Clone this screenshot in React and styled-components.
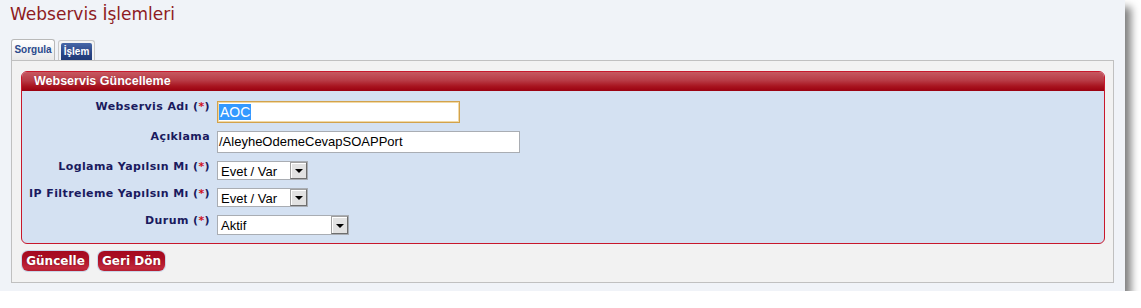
import React from 'react';
import styled, { createGlobalStyle } from 'styled-components';

const Global = createGlobalStyle`
  html, body { margin: 0; padding: 0; background: #ffffff; }
  body { font-family: "DejaVu Sans", Verdana, sans-serif; }
  * { box-sizing: border-box; }
`;

const Window = styled.div`
  width: 1125px;
  height: 291px;
  background: #f0f3f8;
  box-shadow: 6px 7px 8px rgba(0, 0, 0, 0.5);
  padding: 0 11px 8px 11px;
  display: flex;
  flex-direction: column;
`;

const Title = styled.h1`
  margin: 0 0 0 -1px;
  height: 39px;
  padding-top: 3px;
  font-size: 17px;
  line-height: 22px;
  font-weight: normal;
  color: #8e1b22;
`;

const Tabs = styled.div`
  display: flex;
  align-items: flex-end;
  height: 21px;
`;

const Tab = styled.div`
  height: 21px;
  width: 44px;
  border: 1px solid #b9b9b9;
  border-bottom: none;
  border-radius: 3px 3px 0 0;
  background: linear-gradient(#ffffff, #e9e9e9);
  color: #2b4a8c;
  font-family: "Liberation Sans", Arial, sans-serif;
  font-size: 10px;
  font-weight: bold;
  display: flex;
  align-items: center;
  justify-content: center;
  padding-bottom: 1px;
`;

const ActiveTabFrame = styled.div`
  margin-left: 3px;
  height: 20px;
  width: 37px;
  border: 1px solid #c9c9c9;
  border-bottom: none;
  border-radius: 3px 3px 0 0;
  background: #f4f4f4;
  padding: 2px 2px 0 2px;
`;

const ActiveTab = styled.div`
  height: 100%;
  border-radius: 2px 2px 0 0;
  background: linear-gradient(#4767a8, #2a4586 60%, #1f3a78);
  color: #ffffff;
  font-family: "Liberation Sans", Arial, sans-serif;
  font-size: 10px;
  font-weight: bold;
  display: flex;
  align-items: center;
  justify-content: center;
`;

const Panel = styled.div`
  flex: 1;
  border: 1px solid #c0c0c0;
  background: #f2f2f2;
  padding: 10px 8px 9px 9px;
  display: flex;
  flex-direction: column;
`;

const RedBox = styled.div`
  border: 1px solid #c8182c;
  border-radius: 6px;
  background: #d4e1f2;
  overflow: hidden;
`;

const BoxHeader = styled.div`
  height: 19px;
  background: linear-gradient(#c65860 0%, #b83a45 45%, #a8141f 75%, #9a0010 100%);
  color: #ffffff;
  font-family: "Liberation Sans", Arial, sans-serif;
  font-size: 12.5px;
  font-weight: bold;
  line-height: 19px;
  padding-left: 12px;
  text-shadow: 0 0 1px rgba(120, 0, 20, 0.6);
`;

const Form = styled.div`
  display: grid;
  grid-template-columns: 188px 1fr;
  column-gap: 7px;
  row-gap: 8px;
  padding: 10px 0 8px 0;
  align-items: start;
  justify-items: start;
`;

const Label = styled.label`
  justify-self: end;
  margin-top: -1px;
  font-size: 11px;
  line-height: 14px;
  letter-spacing: 0.4px;
  font-weight: bold;
  color: #1a1a5e;
  white-space: nowrap;
`;

const Req = styled.span`
  color: #d0101a;
`;

const Field = styled.div`
  width: ${(p) => p.$w}px;
  height: 22px;
  background: #ffffff;
  border: 1px solid ${(p) => (p.$focus ? '#d2a24c' : '#a9adb3')};
  box-shadow: ${(p) => (p.$focus ? 'inset 0 0 0 1px #f2d9a4' : 'none')};
  font-family: "Liberation Sans", Arial, sans-serif;
  font-size: 13px;
  line-height: 20px;
  padding-left: 1px;
  color: #000000;
  white-space: nowrap;
`;

const Selected = styled.span`
  background: #3399ff;
  color: #ffffff;
  display: inline-block;
  font-size: 14px;
  line-height: 16px;
  margin-top: 2px;
  padding: 0 1px;
`;

const SelectBox = styled.div`
  width: ${(p) => p.$w}px;
  height: ${(p) => p.$h}px;
  background: #ffffff;
  border: 1px solid #a9adb3;
  display: flex;
  align-items: stretch;
  font-family: "Liberation Sans", Arial, sans-serif;
  font-size: 13px;
  color: #000000;
`;

const SelectText = styled.span`
  flex: 1;
  padding-left: 3px;
  display: flex;
  align-items: center;
  padding-top: 1px;
`;

const ArrowBtn = styled.span`
  width: 17px;
  border: 1px solid;
  border-color: #a0a0a0 #6e6e6e #6e6e6e #a0a0a0;
  box-shadow: inset 1px 1px 0 #ffffff;
  background: #e2e2e2;
  display: flex;
  align-items: center;
  justify-content: center;
  &::after {
    content: '';
    border-left: 4px solid transparent;
    border-right: 4px solid transparent;
    border-top: 4px solid #000000;
    margin-top: 1px;
  }
`;

const Buttons = styled.div`
  display: flex;
  gap: 9px;
  margin-top: 7px;
  padding-left: 1px;
`;

const Button = styled.button`
  height: 20px;
  width: ${(p) => p.$w}px;
  padding: 0;
  border: none;
  border-radius: 6px;
  background: linear-gradient(#a5091f 0%, #ac1026 40%, #c0283c 85%, #b51c30 100%);
  box-shadow: 0 0 0 1px #c9d6e8;
  color: #ffffff;
  font-family: "DejaVu Sans", Verdana, sans-serif;
  font-size: 12px;
  font-weight: bold;
  text-shadow: 0 0 1px rgba(90, 0, 10, 0.7);
  cursor: pointer;
`;

function Select({ w, h, value }) {
  return (
    <SelectBox $w={w} $h={h}>
      <SelectText>{value}</SelectText>
      <ArrowBtn />
    </SelectBox>
  );
}

export default function App() {
  return (
    <>
      <Global />
      <Window>
        <Title>Webservis İşlemleri</Title>
        <Tabs>
          <Tab>Sorgula</Tab>
          <ActiveTabFrame>
            <ActiveTab>İşlem</ActiveTab>
          </ActiveTabFrame>
        </Tabs>
        <Panel>
          <RedBox>
            <BoxHeader>Webservis Güncelleme</BoxHeader>
            <Form>
              <Label>Webservis Adı (<Req>*</Req>)</Label>
              <Field $w={243} $focus>
                <Selected>AOC</Selected>
              </Field>

              <Label>Açıklama</Label>
              <Field $w={303}>/AleyheOdemeCevapSOAPPort</Field>

              <Label>Loglama Yapılsın Mı (<Req>*</Req>)</Label>
              <Select w={91} h={19} value="Evet / Var" />

              <Label>IP Filtreleme Yapılsın Mı (<Req>*</Req>)</Label>
              <Select w={91} h={19} value="Evet / Var" />

              <Label>Durum (<Req>*</Req>)</Label>
              <Select w={132} h={20} value="Aktif" />
            </Form>
          </RedBox>
          <Buttons>
            <Button $w={67}>Güncelle</Button>
            <Button $w={67}>Geri Dön</Button>
          </Buttons>
        </Panel>
      </Window>
    </>
  );
}
